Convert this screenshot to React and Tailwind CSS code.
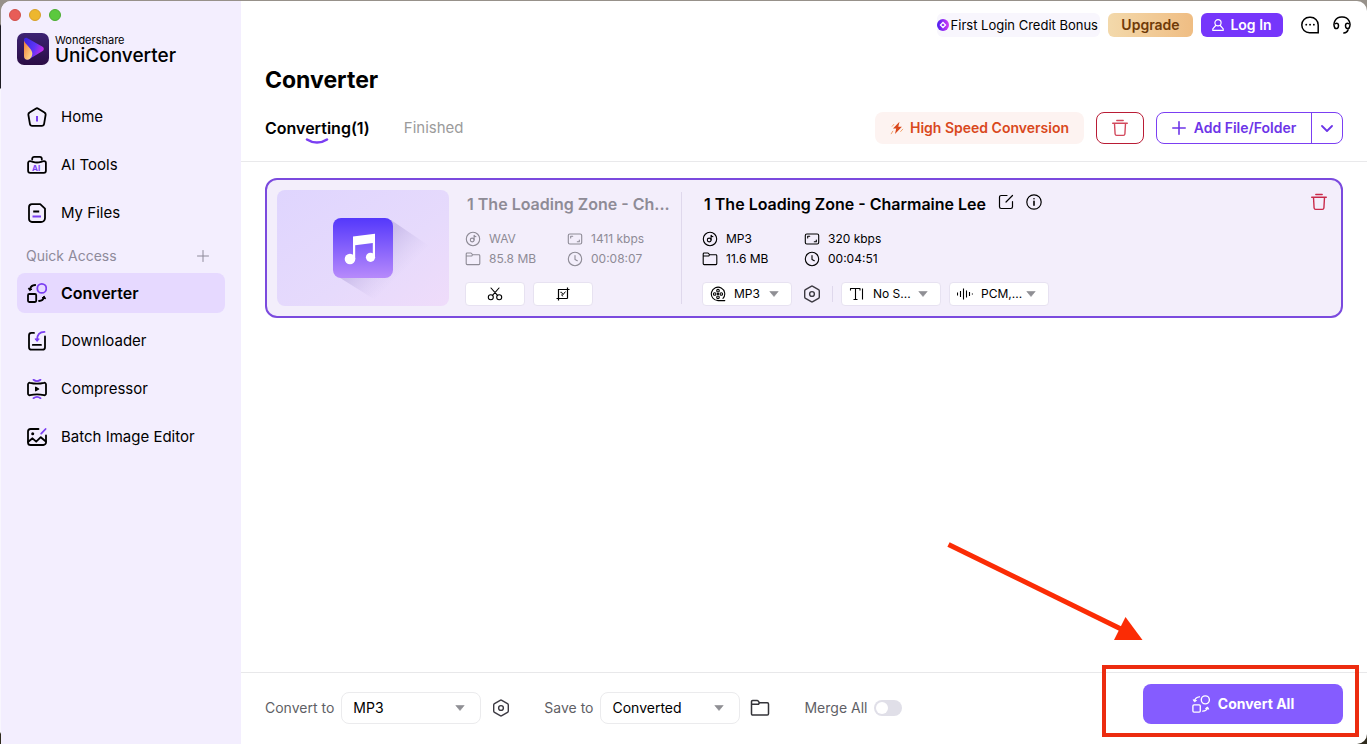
import { useState } from "react";

function Icon({ size = "size-5", box = 20, stroke = 1.6, className = "", children }) {
  return (
    <svg
      viewBox={`0 0 ${box} ${box}`}
      fill="none"
      stroke="currentColor"
      strokeWidth={stroke}
      strokeLinecap="round"
      strokeLinejoin="round"
      aria-hidden="true"
      className={`shrink-0 ${size} ${className}`}
    >
      {children}
    </svg>
  );
}

const ACCENT = "#7b3ff2";

function HomeIcon() {
  return (
    <Icon stroke={1.8}>
      <path d="M8.7 1.7a2.4 2.4 0 0 1 2.6 0l6.2 3.9a2.3 2.3 0 0 1 1.1 2.4l-1.5 8.8a2.4 2.4 0 0 1-2.4 2H5.3a2.4 2.4 0 0 1-2.4-2L1.4 8a2.3 2.3 0 0 1 1.1-2.4z" />
      <path d="M10 9v5.500" stroke={ACCENT} strokeWidth="2" strokeLinecap="butt" />
    </Icon>
  );
}

function AiIcon() {
  return (
    <Icon stroke={1.8}>
      <path d="M5.2 4.500V3.800a2 2 0 0 1 2-2h5.600a2 2 0 0 1 2 2v.7" />
      <path d="M3 6.200c-1 0-1.900.8-1.900 1.900v7.700c0 1.200.9 2.100 2.100 2.100h13.600c1.200 0 2.100-.9 2.100-2.100V8.100c0-1.100-.9-1.900-1.900-1.900-2.600 0-3.500 1.300-7 1.300s-4.400-1.300-7-1.300z" />
      <text x="5" y="16" fontSize="8" fontWeight="700" fill={ACCENT} stroke="none" fontFamily="Inter, sans-serif">AI</text>
    </Icon>
  );
}

function FilesIcon() {
  return (
    <Icon stroke={1.8}>
      <path d="M5 1.200h8.200L18 5.700v9.300a4 4 0 0 1-4 4H5a3 3 0 0 1-3-3V4.200a3 3 0 0 1 3-3z" />
      <path d="M6.200 8.500h6" strokeLinecap="butt" />
      <path d="M5.500 13.500h8.500" stroke={ACCENT} strokeLinecap="butt" />
    </Icon>
  );
}

function ConvertIcon({ size, stroke = 1.8, accent = ACCENT }) {
  return (
    <Icon size={size} stroke={stroke}>
      <rect x="1" y="11" width="8.200" height="8" rx="1.200" />
      <circle cx="14.800" cy="5.400" r="4.500" stroke={accent} />
      <path d="M8.200 2C5.500 2.200 3.600 3.600 3 6" />
      <path d="M1.500 5.600l1.200 2 2-1.200z" fill="currentColor" strokeWidth="1" />
      <path d="M12 18c2.700-.2 4.500-1.600 5-3.800" />
      <path d="M15.300 14.700l2-1.400 1.200 2.100z" fill="currentColor" strokeWidth="1" />
    </Icon>
  );
}

function DownloadIcon() {
  return (
    <Icon stroke={1.8}>
      <path d="M7 1.900H4.500A2.500 2.500 0 0 0 2 4.400v11.800a2.500 2.500 0 0 0 2.500 2.500h11a2.500 2.500 0 0 0 2.500-2.500V5.500" />
      <path d="M5.800 13.900h8.200" />
      <path d="M17.500.9c-4.800 0-7.400 2.600-7.400 8" stroke={ACCENT} />
      <path d="M8.200 8.200l1.900 2.200 1.900-2.200z" fill={ACCENT} stroke={ACCENT} strokeWidth="1" />
    </Icon>
  );
}

function CompressIcon() {
  return (
    <Icon stroke={1.8}>
      <path d="M1 5.500c0-1.200 1-2 2.100-1.700C8 5 12 5 16.900 3.800c1.100-.3 2.100.5 2.100 1.700v9c0 1.200-1 2-2.100 1.700C12 15 8 15 3.100 16.200 2 16.500 1 15.700 1 14.500z" />
      <path d="M8.700 8.300v3.400l2.900-1.700z" fill="currentColor" strokeWidth="1.400" />
      <path d="M6.500.8c2 1.500 5 1.500 7 0M6.500 19.200c2-1.500 5-1.500 7 0" stroke={ACCENT} />
    </Icon>
  );
}

function ImageIcon() {
  return (
    <Icon stroke={1.8}>
      <path d="M11.500 2H3.600A2.600 2.600 0 0 0 1 4.600v10.800A2.600 2.600 0 0 0 3.600 18h12.800a2.600 2.600 0 0 0 2.600-2.600V8.500" />
      <path d="M1.300 14.800l4.200-3.500 3.700 3.400 4.600-4.500 5 4.300" />
      <circle cx="5.700" cy="6.800" r="1.500" fill="currentColor" stroke="none" />
      <path d="M18.600 2l-4.400 4.600" stroke={ACCENT} />
    </Icon>
  );
}

function DiscIcon() {
  return (
    <Icon size="size-4" box={16} stroke={1.1}>
      <circle cx="8" cy="8" r="6.700" />
      <circle cx="7.200" cy="9" r="1.900" />
      <path d="M9.100 9V4.300c.4.900 1 1.300 1.900 1.400" />
    </Icon>
  );
}

function FolderIcon({ size = "size-4", stroke = 1.1 }) {
  return (
    <Icon size={size} box={16} stroke={stroke}>
      <path d="M1.200 12.600V2.900c0-.5.400-.9.900-.9h3.600c.4 0 .7.200.9.500l.9 1.300h6.400c.5 0 .9.400.9.900v7.900c0 .6-.4 1-1 1H2.200c-.6 0-1-.4-1-1zM1.200 5h5.600l.8-1.200" />
    </Icon>
  );
}

function RatioIcon() {
  return (
    <Icon size="size-4" box={16} stroke={1.1}>
      <rect x="1.300" y="3" width="13.400" height="10" rx="1.500" />
      <path d="M3.700 7V5.300h2M12.300 9v1.700h-2" />
    </Icon>
  );
}

function ClockIcon() {
  return (
    <Icon size="size-4" box={16} stroke={1.1}>
      <circle cx="8" cy="8" r="6.700" />
      <path d="M8 4.500v4l2.300 1.200" />
    </Icon>
  );
}

function HexIcon() {
  return (
    <Icon size="size-[18px]" box={18} stroke={1.4} className="text-[#3c3a42]">
      <path d="M8.200 1.300a1.600 1.600 0 0 1 1.600 0l5.700 3.300c.5.300.8.800.8 1.400v6c0 .6-.3 1.100-.8 1.400l-5.700 3.300a1.600 1.600 0 0 1-1.600 0l-5.700-3.300A1.600 1.600 0 0 1 1.700 12V6c0-.6.300-1.100.8-1.400z" />
      <circle cx="9" cy="9" r="2.400" />
    </Icon>
  );
}

function TrashIcon() {
  return (
    <Icon size="size-[18px]" box={18} stroke={1.4}>
      <path d="M1.700 4.300h14.600M5.800 1.500h6.400M3.500 4.500l.6 10.500c.1.900.7 1.400 1.500 1.400h6.800c.8 0 1.400-.5 1.500-1.400l.6-10.500" />
    </Icon>
  );
}

function ReelIcon() {
  return (
    <Icon size="size-4" box={16} stroke={1.1}>
      <path d="M14.800 14.600H8A6.700 6.700 0 1 1 13 12.400" />
      <circle cx="8" cy="4.700" r="1.300" />
      <circle cx="8" cy="11.300" r="1.300" />
      <circle cx="4.700" cy="8" r="1.300" />
      <circle cx="11.300" cy="8" r="1.300" />
      <circle cx="8" cy="8" r=".6" fill="currentColor" />
    </Icon>
  );
}

function TextIcon() {
  return (
    <Icon size="size-4" box={16} stroke={1.1}>
      <path d="M1.500 4.500v-2h9.500v2M6.500 2.500v11M4.500 13.500h4M13.500 2.500v11" strokeLinecap="butt" />
    </Icon>
  );
}

function WaveIcon() {
  return (
    <Icon size="size-4" box={16} stroke={1.1}>
      <path d="M.5 6.500v3M3.500 5v6M6.500 2.500v11M9.500 4.500v7M12.500 6v4M15.400 7.500v1" strokeLinecap="butt" />
    </Icon>
  );
}

function BrandMark() {
  return (
    <svg viewBox="0 0 32 32" className="size-8 shrink-0" aria-hidden="true">
      <defs>
        <linearGradient id="brandBg" x1="0" y1="0" x2="0" y2="1">
          <stop offset="0" stopColor="#3d2373" />
          <stop offset="1" stopColor="#2b0d45" />
        </linearGradient>
        <linearGradient id="brandPlay" x1="0" y1="0" x2="1" y2=".4">
          <stop offset="0" stopColor="#3a22e0" />
          <stop offset=".6" stopColor="#5d35f5" />
          <stop offset="1" stopColor="#c32bea" />
        </linearGradient>
        <linearGradient id="brandLeaf" x1="0" y1="0" x2="1" y2="1">
          <stop offset="0" stopColor="#f07a35" />
          <stop offset="1" stopColor="#ffe79a" />
        </linearGradient>
      </defs>
      <rect width="32" height="32" rx="7" fill="url(#brandBg)" />
      <path d="M7 7c0-1.700 1.500-2.600 3-1.900l15.200 8.400c2.200 1.200 2.200 3.600 0 4.800L12.500 26c-2.500 1.300-5.500 0-5.500-3z" fill="url(#brandPlay)" />
      <path d="M7 7.500c.8 3.800 8.700 8.400 8.300 13.200-.2 3-2.200 5.800-4.700 6-2.200.2-3.600-1.400-3.600-3.700z" fill="url(#brandLeaf)" />
    </svg>
  );
}

const MAIN_LINKS = [
  { label: "Home", icon: <HomeIcon /> },
  { label: "AI Tools", icon: <AiIcon /> },
  { label: "My Files", icon: <FilesIcon /> },
];

const QUICK_LINKS = [
  { label: "Converter", icon: <ConvertIcon />, active: true },
  { label: "Downloader", icon: <DownloadIcon /> },
  { label: "Compressor", icon: <CompressIcon /> },
  { label: "Batch Image Editor", icon: <ImageIcon /> },
];

function NavLink({ label, icon, active }) {
  return (
    <a
      href="#"
      aria-current={active ? "page" : undefined}
      className={`flex h-10 items-center gap-3.5 rounded-lg pl-2.5 whitespace-nowrap ${
        active ? "bg-[#e6d9ff] text-base font-semibold" : "text-[15px]"
      }`}
    >
      {icon}
      {label}
    </a>
  );
}

function Sidebar() {
  return (
    <aside className="w-60 shrink-0 bg-[#f3eefe] px-4">
      <div className="-ml-2 flex gap-2 pt-2">
        <span className="size-3 rounded-full border border-[#cf5049] bg-[#e85d57]" />
        <span className="size-3 rounded-full border border-[#d6a02a] bg-[#edb72e]" />
        <span className="size-3 rounded-full border border-[#4cab32] bg-[#5bc93e]" />
      </div>
      <div className="mt-3 flex h-8 items-center gap-1.5">
        <BrandMark />
        <div>
          <p className="text-[11px] leading-3">Wondershare</p>
          <p className="text-[19px] leading-[19px] font-medium">UniConverter</p>
        </div>
      </div>
      <nav className="mt-8 flex flex-col gap-2">
        {MAIN_LINKS.map((link) => (
          <NavLink key={link.label} {...link} />
        ))}
      </nav>
      <div className="flex h-10 items-center justify-between pt-1.5 pr-4 pl-[9px] text-[#8e8a9a]">
        <h2 className="text-sm">Quick Access</h2>
        <button type="button" aria-label="Add quick access">
          <Icon size="size-3" box={12} stroke={1}>
            <path d="M6 .5v11M.5 6h11" />
          </Icon>
        </button>
      </div>
      <nav className="flex flex-col gap-2">
        {QUICK_LINKS.map((link) => (
          <NavLink key={link.label} {...link} />
        ))}
      </nav>
    </aside>
  );
}

function TopBar() {
  return (
    <div className="flex items-center justify-end gap-2 pt-3 pr-4 pb-[27px] text-sm">
      <button type="button" className="flex h-6 items-center gap-0.5 rounded-md bg-[#f8f6fd] pr-0.5 text-[13px]">
        <svg viewBox="0 0 12 12" className="size-3" aria-hidden="true">
          <defs>
            <linearGradient id="bonus" x1="0" x2="1">
              <stop offset="0" stopColor="#4a1df0" />
              <stop offset="1" stopColor="#d43bf5" />
            </linearGradient>
          </defs>
          <circle cx="6" cy="6" r="6" fill="url(#bonus)" />
          <path d="M6 3.500L8.500 6 6 8.500 3.500 6z" fill="none" stroke="#fff" strokeWidth="1.300" />
        </svg>
        First Login Credit Bonus
      </button>
      <button type="button" className="h-6 w-[85px] rounded-md bg-linear-to-r from-[#f3d9ab] to-[#efbd83] text-sm font-semibold text-[#6f3a08]">
        Upgrade
      </button>
      <button type="button" className="flex h-6 w-[82px] items-center justify-center gap-1.5 rounded-md bg-[#7636fb] text-sm font-semibold text-white">
        <Icon size="size-3" box={12} stroke={1.2}>
          <circle cx="6" cy="3.800" r="3.100" />
          <path d="M3.700 6.500L.8 9.800v1.600h10.400V9.800L8.300 6.500" />
        </Icon>
        Log In
      </button>
      <button type="button" aria-label="Feedback" className="ml-2.5">
        <Icon size="size-[18px]" box={18} stroke={1.5}>
          <path d="M17.200 16.700H8.500C4.200 16.700.8 13.400.8 9S4.200 1.300 8.500 1.300h1c4.200 0 7.700 3.300 7.700 7.700z" strokeLinejoin="miter" />
          <path d="M5.200 8.700h.1M9 8.700h.1M12.800 8.700h.1" strokeWidth="1.800" />
        </Icon>
      </button>
      <button type="button" aria-label="Support" className="ml-1.5">
        <Icon size="size-[18px]" box={18} stroke={1.5}>
          <path d="M2.200 12.400A7.500 7.500 0 0 1 9 .9a7.500 7.500 0 0 1 6.800 11.500" />
          <path d="M2.300 7.600c2.200-.9 3.200.2 3.200 2.200s-1.200 3.200-3.300 2.600M15.700 7.600c-2.200-.9-3.200.2-3.200 2.200s1.200 3.200 3.300 2.600M15 14c-.6 1.800-2 2.900-4.200 3" />
        </Icon>
      </button>
    </div>
  );
}

function Toolbar({ tab, setTab }) {
  return (
    <div className="flex h-8 items-center">
      <div className="flex items-center gap-[34px]" role="tablist">
        <button
          type="button"
          role="tab"
          aria-selected={tab === "converting"}
          onClick={() => setTab("converting")}
          className={`relative ${tab === "converting" ? "text-base font-semibold" : "text-[15px] text-[#9b9b9b]"}`}
        >
          Converting(1)
          <svg viewBox="0 0 24 7" fill="none" className="absolute top-full left-1/2 -mt-0.5 h-[7px] w-6 -translate-x-1/2" aria-hidden="true">
            <path d="M2 1.500c6 4 14 4 20 0" stroke="#7b3ff2" strokeWidth="2.500" strokeLinecap="round" />
          </svg>
        </button>
        <button
          type="button"
          role="tab"
          aria-selected={tab === "finished"}
          onClick={() => setTab("finished")}
          className={tab === "finished" ? "text-base font-semibold" : "text-[15px] text-[#9b9b9b]"}
        >
          Finished
        </button>
      </div>

      <div className="ml-auto flex items-center gap-3 text-sm font-semibold whitespace-nowrap">
        <button type="button" className="flex h-8 w-[209px] items-center justify-center gap-1.5 rounded-lg bg-[#fdf3f1] text-[#d9481c]">
          <Icon size="size-3.5" box={14} stroke={1}>
            <path d="M9.500.8L3 7.500h3.200L5 13l6.900-7.300H8.300z" fill="currentColor" stroke="none" />
            <path d="M3.800 3.400L2.200 5.300M12.700 8.200l-2 2.300M1.200 12.800l1.600-2.600" stroke="#f0a06a" />
          </Icon>
          High Speed Conversion
        </button>
        <button type="button" aria-label="Remove all" className="flex h-8 w-12 items-center justify-center rounded-lg border border-[#b91c35] text-[#d2495c]">
          <TrashIcon />
        </button>
        <div className="flex h-8 w-[187px] divide-x divide-[#7b3ff2] rounded-lg border border-[#7b3ff2] text-[#6d35e8]">
          <button type="button" className="flex flex-1 items-center justify-center gap-2">
            <Icon size="size-3.5" box={14} stroke={1.6}>
              <path d="M7 .8v12.400M.8 7h12.400" />
            </Icon>
            Add File/Folder
          </button>
          <button type="button" aria-label="More add options" className="flex w-[30px] items-center justify-center">
            <Icon size="size-3" box={12} stroke={1.8}>
              <path d="M1 4l5 5 5-5" />
            </Icon>
          </button>
        </div>
      </div>
    </div>
  );
}

function MediaInfo({ format, bitrate, size, duration }) {
  const rows = [
    { icon: <DiscIcon />, text: format },
    { icon: <RatioIcon />, text: bitrate },
    { icon: <FolderIcon />, text: size },
    { icon: <ClockIcon />, text: duration },
  ];
  return (
    <ul className="mt-[13px] grid grid-cols-[102px_auto] justify-start text-xs leading-5">
      {rows.map((row) => (
        <li key={row.text} className="flex items-center gap-2 whitespace-nowrap">
          {row.icon}
          {row.text}
        </li>
      ))}
    </ul>
  );
}

function Caret({ className }) {
  return (
    <svg viewBox="0 0 10 6" className={`pointer-events-none absolute top-1/2 h-1.5 w-2.5 -translate-y-1/2 ${className}`} aria-hidden="true">
      <path d="M.8.500h8.400L5 5.500z" fill="#8f8f94" stroke="#8f8f94" strokeWidth=".6" strokeLinejoin="round" />
    </svg>
  );
}

function SmallSelect({ label, icon, value, width }) {
  return (
    <div className={`relative flex h-6 items-center rounded border border-[#e7e2f1] bg-white ${width}`}>
      <span className="pointer-events-none absolute left-[7px]">{icon}</span>
      <select aria-label={label} defaultValue={value} className="h-full w-full appearance-none rounded pl-[31px] text-xs">
        <option>{value}</option>
      </select>
      <Caret className="right-3" />
    </div>
  );
}

function FooterSelect({ id, value }) {
  return (
    <div className="relative h-8 w-[140px]">
      <select id={id} defaultValue={value} className="h-full w-full appearance-none rounded-lg border border-[#ebebed] bg-white px-[11px] text-sm text-black">
        <option>{value}</option>
      </select>
      <Caret className="right-4" />
    </div>
  );
}

function Thumbnail() {
  return (
    <svg viewBox="0 0 172 116" className="h-[116px] w-[172px] shrink-0 rounded-lg" aria-hidden="true">
      <defs>
        <linearGradient id="thumbBg" x1="0" y1="0" x2="1" y2="1">
          <stop offset="0" stopColor="#dfd5fe" />
          <stop offset=".6" stopColor="#e6dafc" />
          <stop offset="1" stopColor="#efdcfa" />
        </linearGradient>
        <linearGradient id="thumbTile" x1="0" y1="0" x2="0" y2="1">
          <stop offset="0" stopColor="#5438fb" />
          <stop offset="1" stopColor="#b78afb" />
        </linearGradient>
        <linearGradient id="thumbShade" gradientUnits="userSpaceOnUse" x1="92" y1="64" x2="118" y2="90">
          <stop offset="0" stopColor="#b9aadf" stopOpacity=".6" />
          <stop offset="1" stopColor="#cdbfeb" stopOpacity="0" />
        </linearGradient>
      </defs>
      <rect width="172" height="116" fill="url(#thumbBg)" />
      <path d="M114 30L164 64 108 116 60 86z" fill="url(#thumbShade)" />
      <rect x="56" y="28" width="60" height="60" rx="8" fill="url(#thumbTile)" />
      <path d="M76 46.500l22-2.700v24h-2.200V53l-17.600 2.200V69H76z" fill="#fff" />
      <circle cx="73" cy="69" r="5.300" fill="#fff" />
      <circle cx="93.500" cy="67.300" r="4.600" fill="#fff" />
    </svg>
  );
}

function FileCard() {
  return (
    <article className="relative flex rounded-xl border-2 border-[#7b4ade] bg-[#f3eefb] p-2.5">
      <Thumbnail />
      <div className="ml-4 w-[216px] text-[#8e8b96]">
        <h3 className="pt-0.5 pl-0.5 text-base leading-6 font-semibold whitespace-nowrap">1 The Loading Zone - Ch...</h3>
        <MediaInfo format="WAV" bitrate="1411 kbps" size="85.8 MB" duration="00:08:07" />
        <div className="mt-[13px] flex gap-2 text-black">
          <button type="button" aria-label="Trim" className="flex h-6 w-[60px] items-center justify-center rounded border border-[#e7e2f1] bg-white">
            <Icon size="size-4" box={16} stroke={1.1}>
              <circle cx="3.800" cy="11.200" r="2.500" />
              <circle cx="12.200" cy="11.200" r="2.500" />
              <path d="M4 2l6.500 7.400M12 2L5.500 9.400" />
            </Icon>
          </button>
          <button type="button" aria-label="Crop" className="flex h-6 w-[60px] items-center justify-center rounded border border-[#e7e2f1] bg-white">
            <Icon size="size-4" box={16} stroke={1.2}>
              <path d="M3.500 3v11.500M1.500 12.500h11M3 3.500h11.500M12.500 1.500v11" strokeLinecap="butt" />
              <path d="M5.800 6.300h.8l1.400 2.400 2.200-2.800M6.500 9l1.300 1" strokeWidth="1" />
            </Icon>
          </button>
        </div>
      </div>
      <div className="my-0.5 w-px bg-[#dfd8ec]" />
      <div className="ml-5 min-w-0 flex-1">
        <div className="flex items-center gap-3 pt-0.5 pl-0.5">
          <h3 className="truncate text-base leading-6 font-semibold">1 The Loading Zone - Charmaine Lee</h3>
          <button type="button" aria-label="Rename" className="-mt-1">
            <Icon size="size-4" box={16} stroke={1.2}>
              <path d="M9 1.500H3.200c-1 0-1.700.7-1.700 1.700v9.600c0 1 .7 1.700 1.700 1.700h9.600c1 0 1.700-.7 1.700-1.700V7.500M14.500 1.500L8 8" />
            </Icon>
          </button>
          <button type="button" aria-label="File information" className="-mt-1">
            <Icon size="size-4" box={16} stroke={1.2}>
              <circle cx="8" cy="8" r="7.200" />
              <path d="M8 7.200v4M8 4.700v.1" strokeWidth="1.600" />
            </Icon>
          </button>
        </div>
        <MediaInfo format="MP3" bitrate="320 kbps" size="11.6 MB" duration="00:04:51" />
        <div className="mt-[13px] flex items-center gap-2">
          <SmallSelect label="Output format" icon={<ReelIcon />} value="MP3" width="w-[90px]" />
          <button type="button" aria-label="Format settings" className="mx-[3px]">
            <HexIcon />
          </button>
          <span className="h-4 w-px bg-[#dfd8ec]" />
          <SmallSelect label="Subtitle" icon={<TextIcon />} value="No S..." width="w-[100px]" />
          <SmallSelect label="Audio track" icon={<WaveIcon />} value="PCM,..." width="w-[100px]" />
        </div>
      </div>
      <button type="button" aria-label="Remove file" className="mt-[3px] mr-[3px] self-start text-[#c92a4a]">
        <TrashIcon />
      </button>
    </article>
  );
}

function BottomBar() {
  const [merge, setMerge] = useState(false);
  return (
    <footer className="flex h-[72px] items-center border-t border-[#e8e8ea] px-6 pb-0.5 text-sm whitespace-nowrap text-[#5f5f66]">
      <label htmlFor="convert-to" className="mr-[7px]">Convert to</label>
      <FooterSelect id="convert-to" value="MP3" />
      <button type="button" aria-label="Output settings" className="ml-[11px]">
        <HexIcon />
      </button>
      <label htmlFor="save-to" className="mr-[7px] ml-[34px]">Save to</label>
      <FooterSelect id="save-to" value="Converted" />
      <button type="button" aria-label="Open folder" className="ml-2.5 text-[#333338]">
        <FolderIcon size="size-5" stroke={1.2} />
      </button>
      <label htmlFor="merge" className="mr-[7px] ml-[34px]">Merge All</label>
      <input
        id="merge"
        type="checkbox"
        role="switch"
        checked={merge}
        onChange={(e) => setMerge(e.target.checked)}
        className="h-4 w-7 appearance-none rounded-full bg-[#e0dfe8] p-0.5 before:block before:size-3 before:rounded-full before:bg-white checked:bg-[#855cff] checked:before:ml-3"
      />
      <div className="relative mb-2 ml-auto">
        <button type="button" className="flex h-10 w-[200px] items-center justify-center gap-2 rounded-lg bg-[#855cff] text-sm font-bold text-white">
          <ConvertIcon size="size-[18px]" stroke={1.5} accent="#fff" />
          Convert All
        </button>
        {/* Highlight around the call to action */}
        <div className="pointer-events-none absolute -top-[19px] -right-4 -bottom-[13px] -left-[41px] border-4 border-[#ec2c10]" />
      </div>
    </footer>
  );
}

export default function App() {
  const [tab, setTab] = useState("converting");

  return (
    <div className="relative flex min-h-screen bg-[linear-gradient(to_bottom,#97918a_0,#97918a_24px,#1d1b22_26px,#1d1b22_88px,#f8f6fd_89px,#f8f6fd_calc(100%-12px),#2e2a1c_calc(100%-10px))] pt-px pl-px font-[Inter,'Liberation_Sans',sans-serif] text-black">
      <div className="flex min-w-0 flex-1 overflow-hidden rounded-t-[10px] rounded-br-[10px] bg-white">
        <Sidebar />
        <main className="flex min-w-0 flex-1 flex-col">
          <TopBar />
          <header className="border-b border-[#e9e9eb] px-6 pb-[17px]">
            <h1 className="mb-4 text-[23px] leading-8 font-bold">Converter</h1>
            <Toolbar tab={tab} setTab={setTab} />
          </header>
          <section className="flex-1 px-6 pt-4">
            <FileCard />
          </section>
          <BottomBar />
        </main>
      </div>

      {/* Arrow pointing at Convert All */}
      <svg viewBox="0 0 196 100" className="pointer-events-none absolute right-[224px] bottom-[103px] h-[100px] w-[196px]" aria-hidden="true">
        <path d="M1.500 3.500L174 88" stroke="#fb2c05" strokeWidth="5" />
        <path d="M178.500 76L195.500 99H167z" fill="#fb2c05" />
      </svg>
    </div>
  );
}
